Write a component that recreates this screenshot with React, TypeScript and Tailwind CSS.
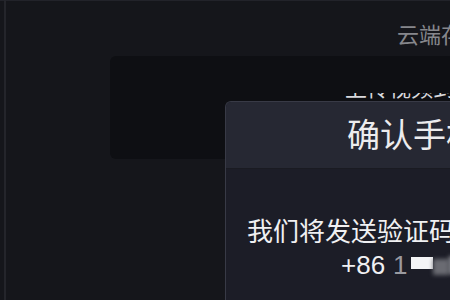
import React from "react";

export default function App() {
  const font = { fontFamily: '"Noto Sans CJK SC", "Noto Sans", sans-serif' };
  return (
    <div className="relative w-[450px] h-[300px] overflow-hidden bg-[#15161b]" style={font}>
      <div className="absolute left-0 top-0 w-full h-px bg-[#22232a]" />
      <div className="absolute left-[4px] top-0 w-[2px] h-full bg-[#24252b]" />
      <div className="pl-[397px] pt-[18px] h-[56px] text-[22px] leading-[30px] text-[#86878c] whitespace-nowrap">
        云端存储
      </div>
      <div className="ml-[110px] w-[420px] h-[103px] rounded-[6px] bg-[#0e0f13] pt-[37px] pl-[235px]">
        <div className="h-[8px] overflow-hidden">
          <div className="mt-[-22px] text-[22px] leading-[30px] text-[#d8d8dc] whitespace-nowrap">
            上传视频到云端
          </div>
        </div>
      </div>
      <div className="absolute left-[225px] top-[101px] w-[460px] h-[260px] rounded-[6px] overflow-hidden bg-[#1c1d27] border-l border-t border-[#383a46]">
        <div className="h-[67px] bg-[#262833] border-b border-[#1a1b22] pl-[121px] pt-[11px] text-[33px] leading-[40px] text-[#ececee] whitespace-nowrap">
          确认手机号码
        </div>
        <div className="pt-[43px] pl-[21px] text-[26px] leading-[36px] text-[#f0f0f2] whitespace-nowrap">
          我们将发送验证码至以下手机号
        </div>
        <div className="pl-[115px] text-[26px] leading-[34px] text-[#f0f0f2] whitespace-nowrap flex items-center" style={{ fontFamily: '"Liberation Sans", "Noto Sans CJK SC", sans-serif' }}>
          <span>+86 </span>
          <span className="ml-[8px] text-[#9a9aa0]">1</span>
          <span className="ml-[3px] inline-block w-[22px] h-[12px] bg-[#f4f4f6] mt-[-4px]" />
          <span className="inline-block w-[16px] h-[16px] bg-[#6a6b72] blur-[2px] mt-[4px]" />
          <span className="inline-block w-[16px] h-[18px] bg-[#8a8b92] blur-[2px]" />
        </div>
      </div>
    </div>
  );
}
